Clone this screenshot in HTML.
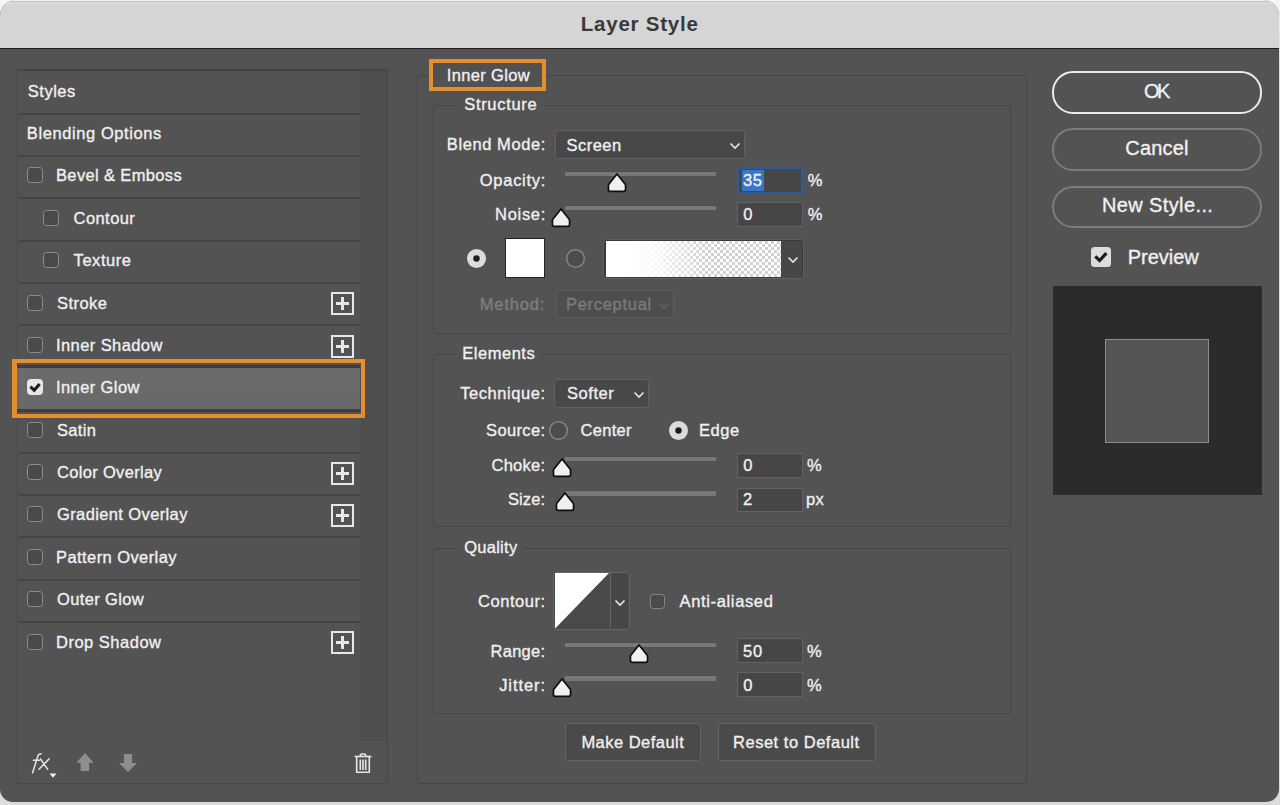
<!DOCTYPE html>
<html><head><meta charset="utf-8"><title>Layer Style</title>
<style>
*{margin:0;padding:0;box-sizing:border-box}
html,body{width:1280px;height:805px;overflow:hidden;background:linear-gradient(#f6f6f6,#dcdcdc 8%,#dcdcdc)}
body{position:relative;font-family:"Liberation Sans",sans-serif}
#win{position:absolute;left:0;top:0;width:1279px;height:802px;background:#535353;border-radius:16px 16px 13px 13px;overflow:hidden}
#win div,#win svg{position:absolute}
.tx{white-space:nowrap;color:#f0f0f0;-webkit-text-stroke:0.35px currentColor}
.sep{left:19px;width:341px;height:2px;background:#454545}
.cb{width:16px;height:16px;border:1.5px solid #8c8c8c;border-radius:3.5px;background:#4a4a4a}
.cb.on{background:#e6e6e6;border-color:#e6e6e6}
.plus{left:331px;width:23px;height:23px;border:2px solid #e8e8e8}
.plus:before{content:"";position:absolute;left:3px;top:8px;width:13px;height:3px;background:#e8e8e8}
.plus:after{content:"";position:absolute;left:8px;top:3px;width:3px;height:13px;background:#e8e8e8}
.grp{border:1px solid #454545;border-radius:2px}
.lbg{background:#535353;height:6px}
.dd{background:#484848;border:1.5px solid #616161;border-radius:3.5px}
.inp{background:#464646;border:1.2px solid #626262}
.track{left:565px;width:151px;height:4.6px;background:#787878;border-radius:1px;box-shadow:0 -1px 0 #4d4d4d}
.btn{background:#4a4a4a;border:1.5px solid #646464;border-radius:3px}
.pill{left:1052px;width:210px;height:42.5px;border:2px solid #7c7c7c;border-radius:21px}

</style></head><body>
<div id="win">
<div style="left:0;top:0;width:1279px;height:49px;background:#d5d5d5;border-top:1px solid #f2f2f2;box-shadow:inset 0 1.5px 0 #c6c6c6,inset 0 2.5px 0 #e6e6e6;border-bottom:1px solid #1f1f1f"></div>
<div style="left:17px;top:69px;width:371px;height:715px;border:1px solid #474747;border-top:2px solid #444"></div>
<div style="left:360px;top:71px;width:27px;height:670px;background:#4e4e4e"></div>
<div class="sep" style="top:112.5px"></div>
<div class="sep" style="top:154.9px"></div>
<div class="sep" style="top:197.2px"></div>
<div class="sep" style="top:239.6px"></div>
<div class="sep" style="top:282.0px"></div>
<div class="sep" style="top:324.4px"></div>
<div class="sep" style="top:451.5px"></div>
<div class="sep" style="top:493.9px"></div>
<div class="sep" style="top:536.3px"></div>
<div class="sep" style="top:578.7px"></div>
<div class="sep" style="top:621.0px"></div>
<div style="left:17px;top:365.4px;width:343px;height:46.2px;background:linear-gradient(#6b6b6b,#696969);border-top:3px solid #3d3d45;border-bottom:3px solid #3d3d45"></div>
<div style="left:12px;top:359.3px;width:352.5px;height:58.7px;border:4.6px solid #e58e2d;border-left-width:5px;border-right-width:4.3px"></div>
<div class="cb" style="left:27.1px;top:167.4px"></div>
<div class="cb" style="left:43.2px;top:209.7px"></div>
<div class="cb" style="left:43.2px;top:252.1px"></div>
<div class="cb" style="left:27.1px;top:294.5px"></div>
<div class="cb" style="left:27.1px;top:336.9px"></div>
<div class="cb on" style="left:27.1px;top:379.3px"><svg style="left:-1.5px;top:-1.5px" width="16" height="16" viewBox="0 0 16 16"><path d="M3.4 7.7 L7.2 11.3 L12.6 4.9" fill="none" stroke="#1c1c1c" stroke-width="3.1" stroke-linecap="butt" stroke-linejoin="miter"/></svg></div>
<div class="cb" style="left:27.1px;top:421.6px"></div>
<div class="cb" style="left:27.1px;top:464.0px"></div>
<div class="cb" style="left:27.1px;top:506.4px"></div>
<div class="cb" style="left:27.1px;top:548.8px"></div>
<div class="cb" style="left:27.1px;top:591.2px"></div>
<div class="cb" style="left:27.1px;top:633.5px"></div>
<div class="plus" style="top:292.3px"></div>
<div class="plus" style="top:334.7px"></div>
<div class="plus" style="top:461.8px"></div>
<div class="plus" style="top:504.2px"></div>
<div class="plus" style="top:631.3px"></div>
<svg style="left:28px;top:750px" width="26" height="26" viewBox="28 750 26 26"><g fill="none" stroke="#e6e6e6" stroke-width="1.5" stroke-linecap="round"><path d="M32.6 772.8 L37.8 756.2 Q38.7 753.8 41.1 753.8"/><path d="M33.4 760.2 H39.8"/><path d="M39 769.3 L49.2 758.8 M40.5 758.8 L47.7 769.3"/></g></svg>
<svg style="left:49px;top:773px" width="8" height="6" viewBox="0 0 8 6"><path d="M0.5 0.5 H7.5 L4 4.8 Z" fill="#f0f0f0"/></svg>
<svg style="left:75px;top:753px" width="20" height="20" viewBox="0 0 20 20"><path d="M10 0.1 L18.6 9.8 H14.2 V18 H5.6 V9.8 H1.4 Z" fill="#8e8e8e"/></svg>
<svg style="left:118px;top:753px" width="20" height="20" viewBox="0 0 20 20"><path d="M10 19 L19 10 H14 V1 H6 V10 H1 Z" fill="#8e8e8e"/></svg>
<svg style="left:353px;top:753px" width="20" height="21" viewBox="0 0 20 21"><g fill="none" stroke="#e6e6e6" stroke-width="1.6"><path d="M1.5 3.5 H18.5"/><path d="M7.2 3.5 V2.8 Q7.2 1 9 1 H11 Q12.8 1 12.8 2.8 V3.5"/><path d="M3.7 3.5 V19.3 H16.3 V3.5"/><path d="M7.3 6.5 V17 M10 6.5 V17 M12.7 6.5 V17"/></g></svg>
<div class="grp" style="left:416.5px;top:75px;width:610.5px;height:709px"></div>
<div class="grp" style="left:433px;top:104.5px;width:578px;height:229px"></div>
<div class="lbg" style="left:456px;top:101px;width:89px"></div>
<div class="grp" style="left:433px;top:353.5px;width:578px;height:173px"></div>
<div class="lbg" style="left:455px;top:350px;width:88px"></div>
<div class="grp" style="left:433px;top:547.5px;width:578px;height:166px"></div>
<div class="lbg" style="left:456px;top:544px;width:68px"></div>
<div style="left:429px;top:58.5px;width:116.5px;height:32px;border:4px solid #e58e2d;background:#515151"></div>
<div class="dd" style="left:554.5px;top:130px;width:190.5px;height:28.5px"></div>
<svg style="left:728.5px;top:142px" width="12" height="8" viewBox="0 0 12 8"><path d="M1.5 1.5 L6 6 L10.5 1.5" fill="none" stroke="#e8e8e8" stroke-width="1.6"/></svg>
<div class="track" style="top:171.6px"></div>
<svg style="left:605.9px;top:173.1px" width="22" height="22" viewBox="0 0 22 22"><path d="M11 1 L19.2 11.3 Q19.55 11.75 19.55 12.4 L19.55 16.6 Q19.55 18.45 17.7 18.45 L4.3 18.45 Q2.45 18.45 2.45 16.6 L2.45 12.4 Q2.45 11.75 2.8 11.3 Z" fill="#f0f0f0" stroke="#0e0e0e" stroke-width="1.7" stroke-linejoin="round"/></svg>
<div class="track" style="top:205.6px"></div>
<svg style="left:550.4px;top:207.7px" width="22" height="22" viewBox="0 0 22 22"><path d="M11 1 L19.2 11.3 Q19.55 11.75 19.55 12.4 L19.55 16.6 Q19.55 18.45 17.7 18.45 L4.3 18.45 Q2.45 18.45 2.45 16.6 L2.45 12.4 Q2.45 11.75 2.8 11.3 Z" fill="#f0f0f0" stroke="#0e0e0e" stroke-width="1.7" stroke-linejoin="round"/></svg>
<div class="track" style="top:456.6px"></div>
<svg style="left:550.5px;top:457.9px" width="22" height="22" viewBox="0 0 22 22"><path d="M11 1 L19.2 11.3 Q19.55 11.75 19.55 12.4 L19.55 16.6 Q19.55 18.45 17.7 18.45 L4.3 18.45 Q2.45 18.45 2.45 16.6 L2.45 12.4 Q2.45 11.75 2.8 11.3 Z" fill="#f0f0f0" stroke="#0e0e0e" stroke-width="1.7" stroke-linejoin="round"/></svg>
<div class="track" style="top:491.0px"></div>
<svg style="left:553.7px;top:492.4px" width="22" height="22" viewBox="0 0 22 22"><path d="M11 1 L19.2 11.3 Q19.55 11.75 19.55 12.4 L19.55 16.6 Q19.55 18.45 17.7 18.45 L4.3 18.45 Q2.45 18.45 2.45 16.6 L2.45 12.4 Q2.45 11.75 2.8 11.3 Z" fill="#f0f0f0" stroke="#0e0e0e" stroke-width="1.7" stroke-linejoin="round"/></svg>
<div class="track" style="top:642.5px"></div>
<svg style="left:628.4px;top:643.9px" width="22" height="22" viewBox="0 0 22 22"><path d="M11 1 L19.2 11.3 Q19.55 11.75 19.55 12.4 L19.55 16.6 Q19.55 18.45 17.7 18.45 L4.3 18.45 Q2.45 18.45 2.45 16.6 L2.45 12.4 Q2.45 11.75 2.8 11.3 Z" fill="#f0f0f0" stroke="#0e0e0e" stroke-width="1.7" stroke-linejoin="round"/></svg>
<div class="track" style="top:676.0px"></div>
<svg style="left:550.5px;top:678.3px" width="22" height="22" viewBox="0 0 22 22"><path d="M11 1 L19.2 11.3 Q19.55 11.75 19.55 12.4 L19.55 16.6 Q19.55 18.45 17.7 18.45 L4.3 18.45 Q2.45 18.45 2.45 16.6 L2.45 12.4 Q2.45 11.75 2.8 11.3 Z" fill="#f0f0f0" stroke="#0e0e0e" stroke-width="1.7" stroke-linejoin="round"/></svg>
<div style="left:736.6px;top:167px;width:66.6px;height:27.2px;border:2.6px solid #2d5c9e;background:#464646"></div>
<div style="left:741.5px;top:170.3px;width:22.8px;height:20.4px;background:#3a76c6"></div>
<div class="inp" style="left:737px;top:202px;width:65.5px;height:25.0px"></div>
<div class="inp" style="left:737px;top:453px;width:65.5px;height:24.5px"></div>
<div class="inp" style="left:737px;top:487.5px;width:65.5px;height:24.5px"></div>
<div class="inp" style="left:737px;top:637.8px;width:65.5px;height:25.0px"></div>
<div class="inp" style="left:737px;top:672.2px;width:65.5px;height:25.0px"></div>
<svg style="left:466px;top:248px" width="21" height="21" viewBox="0 0 21 21"><circle cx="10.5" cy="10.5" r="9.5" fill="#dcdcdc"/><circle cx="10.5" cy="10.5" r="3.2" fill="#1e1e1e"/></svg>
<div style="left:505px;top:238px;width:40px;height:40.3px;background:#ffffff;border:1.5px solid #222"></div>
<svg style="left:564.5px;top:248px" width="21" height="21" viewBox="0 0 21 21"><circle cx="10.5" cy="10.5" r="8.8" fill="#4c4c4c" stroke="#858585" stroke-width="1.5"/></svg>
<div style="left:602.8px;top:238.6px;width:200.8px;height:40.8px;background:#3a3a3a;border:1.5px solid #5f5f5f;border-radius:4px"></div>
<div style="left:781px;top:240.5px;width:21px;height:37px;background:#474747;border-radius:0 3px 3px 0"></div>
<div style="left:605.8px;top:241.1px;width:175px;height:36.4px;background-color:#fff;background-image:linear-gradient(90deg,#ffffff 0%,#ffffff 12%,rgba(255,255,255,0.85) 28%,rgba(255,255,255,0) 58%),repeating-conic-gradient(#d2d2d2 0 25%,#ffffff 0 50%);background-size:100% 100%,6px 6px"></div>
<svg style="left:786.5px;top:256px" width="12" height="8" viewBox="0 0 12 8"><path d="M1.5 1.5 L6 6 L10.5 1.5" fill="none" stroke="#e8e8e8" stroke-width="1.6"/></svg>
<div style="left:555.8px;top:289.6px;width:118px;height:28.4px;background:#4e4e4e;border:1.2px solid #5b5b5b;border-radius:3px"></div>
<svg style="left:658px;top:301.5px" width="12" height="8" viewBox="0 0 12 8"><path d="M1.5 1.5 L6 6 L10.5 1.5" fill="none" stroke="#646464" stroke-width="1.4"/></svg>
<div class="dd" style="left:554.4px;top:379px;width:94.4px;height:29px"></div>
<svg style="left:632.5px;top:391px" width="12" height="8" viewBox="0 0 12 8"><path d="M1.5 1.5 L6 6 L10.5 1.5" fill="none" stroke="#e8e8e8" stroke-width="1.6"/></svg>
<svg style="left:548px;top:420px" width="21" height="21" viewBox="0 0 21 21"><circle cx="10.5" cy="10.5" r="8.8" fill="#4c4c4c" stroke="#858585" stroke-width="1.5"/></svg>
<svg style="left:667.5px;top:420px" width="21" height="21" viewBox="0 0 21 21"><circle cx="10.5" cy="10.5" r="9.5" fill="#dcdcdc"/><circle cx="10.5" cy="10.5" r="3.2" fill="#1e1e1e"/></svg>
<div style="left:553.3px;top:571.8px;width:76.5px;height:57.8px;background:#474747;border:1.5px solid #666;border-radius:4px"></div>
<svg style="left:555px;top:572.8px" width="55" height="55.6" viewBox="0 0 55 55.6" preserveAspectRatio="none"><rect width="55" height="55.6" fill="#4a4a4a"/><path d="M0 0 H54 L0 55.6 Z" fill="#ffffff"/></svg>
<div style="left:609.5px;top:572.8px;width:1.5px;height:55.6px;background:#666"></div>
<svg style="left:613.5px;top:599px" width="12" height="8" viewBox="0 0 12 8"><path d="M1.5 1.5 L6 6 L10.5 1.5" fill="none" stroke="#e8e8e8" stroke-width="1.6"/></svg>
<div class="cb" style="left:649.5px;top:593.5px;width:15.5px;height:15px;border-color:#858585"></div>
<div class="btn" style="left:565.2px;top:723px;width:135.5px;height:37.6px"></div>
<div class="btn" style="left:717.5px;top:723px;width:158.5px;height:37.6px"></div>
<div class="pill" style="top:71.2px;border:2px solid #ececec"></div>
<div class="pill" style="top:128.2px"></div>
<div class="pill" style="top:185.7px"></div>
<div style="left:1091.2px;top:247px;width:20px;height:19.6px;background:#dcdcdc;border-radius:3.5px"><svg style="left:-1px;top:-1px" width="20" height="20" viewBox="0 0 20 20"><path d="M5.3 10.3 L9.6 14.5 L16.4 7.1" fill="none" stroke="#1c1c1c" stroke-width="3.2" stroke-linecap="butt" stroke-linejoin="miter"/></svg></div>
<div style="left:1052.5px;top:286px;width:209.5px;height:209px;background:#2b2b2b"></div>
<div style="left:1105.4px;top:338.9px;width:104px;height:104px;background:#555555;border:1px solid #8c8c8c"></div>
<div class="tx" style="left:580.8px;top:14.2px;font-size:20.5px;line-height:20.5px;letter-spacing:0.77px;font-weight:bold;-webkit-text-stroke:0;color:#393939">Layer Style</div>
<div class="tx" style="left:27.8px;top:82.6px;font-size:16.5px;line-height:16.5px;letter-spacing:0.50px">Styles</div>
<div class="tx" style="left:26.8px;top:125.0px;font-size:16.5px;line-height:16.5px;letter-spacing:0.59px">Blending Options</div>
<div class="tx" style="left:56.0px;top:167.4px;font-size:16.5px;line-height:16.5px;letter-spacing:0.36px">Bevel &amp; Emboss</div>
<div class="tx" style="left:73.6px;top:209.7px;font-size:16.5px;line-height:16.5px;letter-spacing:0.42px">Contour</div>
<div class="tx" style="left:73.6px;top:252.1px;font-size:16.5px;line-height:16.5px;letter-spacing:0.54px">Texture</div>
<div class="tx" style="left:57.0px;top:294.5px;font-size:16.5px;line-height:16.5px;letter-spacing:0.45px">Stroke</div>
<div class="tx" style="left:56.0px;top:336.9px;font-size:16.5px;line-height:16.5px;letter-spacing:0.41px">Inner Shadow</div>
<div class="tx" style="left:56.0px;top:379.3px;font-size:16.5px;line-height:16.5px;letter-spacing:0.40px">Inner Glow</div>
<div class="tx" style="left:57.0px;top:421.6px;font-size:16.5px;line-height:16.5px;letter-spacing:0.34px">Satin</div>
<div class="tx" style="left:57.0px;top:464.0px;font-size:16.5px;line-height:16.5px;letter-spacing:0.32px">Color Overlay</div>
<div class="tx" style="left:57.0px;top:506.4px;font-size:16.5px;line-height:16.5px;letter-spacing:0.38px">Gradient Overlay</div>
<div class="tx" style="left:56.0px;top:548.8px;font-size:16.5px;line-height:16.5px;letter-spacing:0.42px">Pattern Overlay</div>
<div class="tx" style="left:57.0px;top:591.2px;font-size:16.5px;line-height:16.5px;letter-spacing:0.36px">Outer Glow</div>
<div class="tx" style="left:56.0px;top:633.5px;font-size:16.5px;line-height:16.5px;letter-spacing:0.50px">Drop Shadow</div>
<div class="tx" style="left:446.8px;top:66.6px;font-size:16.5px;line-height:16.5px;letter-spacing:0.35px">Inner Glow</div>
<div class="tx" style="left:464.2px;top:95.6px;font-size:16.5px;line-height:16.5px;letter-spacing:0.69px">Structure</div>
<div class="tx" style="left:446.8px;top:136.2px;font-size:16.5px;line-height:16.5px;letter-spacing:0.58px">Blend Mode:</div>
<div class="tx" style="left:566.5px;top:136.6px;font-size:16.5px;line-height:16.5px;letter-spacing:0.46px">Screen</div>
<div class="tx" style="left:479.8px;top:172.0px;font-size:16.5px;line-height:16.5px;letter-spacing:0.72px">Opacity:</div>
<div class="tx" style="left:743.1px;top:171.7px;font-size:16.5px;line-height:16.5px;letter-spacing:0.60px">35</div>
<div class="tx" style="left:807.8px;top:171.7px;font-size:16.5px;line-height:16.5px;letter-spacing:0.00px">%</div>
<div class="tx" style="left:495.1px;top:206.4px;font-size:16.5px;line-height:16.5px;letter-spacing:0.68px">Noise:</div>
<div class="tx" style="left:743.3px;top:206.4px;font-size:16.5px;line-height:16.5px;letter-spacing:0.00px">0</div>
<div class="tx" style="left:807.8px;top:206.4px;font-size:16.5px;line-height:16.5px;letter-spacing:0.00px">%</div>
<div class="tx" style="left:479.8px;top:296.3px;font-size:16.5px;line-height:16.5px;letter-spacing:0.83px;color:#7e7e7e">Method:</div>
<div class="tx" style="left:566.0px;top:296.3px;font-size:16.5px;line-height:16.5px;letter-spacing:0.70px;color:#7a7a7a">Perceptual</div>
<div class="tx" style="left:462.3px;top:344.8px;font-size:16.5px;line-height:16.5px;letter-spacing:0.52px">Elements</div>
<div class="tx" style="left:460.2px;top:385.4px;font-size:16.5px;line-height:16.5px;letter-spacing:0.56px">Technique:</div>
<div class="tx" style="left:567.1px;top:385.4px;font-size:16.5px;line-height:16.5px;letter-spacing:0.52px">Softer</div>
<div class="tx" style="left:486.1px;top:422.0px;font-size:16.5px;line-height:16.5px;letter-spacing:0.35px">Source:</div>
<div class="tx" style="left:580.5px;top:422.0px;font-size:16.5px;line-height:16.5px;letter-spacing:0.31px">Center</div>
<div class="tx" style="left:698.9px;top:422.0px;font-size:16.5px;line-height:16.5px;letter-spacing:0.55px">Edge</div>
<div class="tx" style="left:491.5px;top:456.6px;font-size:16.5px;line-height:16.5px;letter-spacing:0.26px">Choke:</div>
<div class="tx" style="left:743.3px;top:456.6px;font-size:16.5px;line-height:16.5px;letter-spacing:0.00px">0</div>
<div class="tx" style="left:807.1px;top:456.6px;font-size:16.5px;line-height:16.5px;letter-spacing:0.00px">%</div>
<div class="tx" style="left:508.0px;top:490.7px;font-size:16.5px;line-height:16.5px;letter-spacing:0.10px">Size:</div>
<div class="tx" style="left:743.0px;top:490.7px;font-size:16.5px;line-height:16.5px;letter-spacing:0.00px">2</div>
<div class="tx" style="left:806.1px;top:490.7px;font-size:16.5px;line-height:16.5px;letter-spacing:0.22px">px</div>
<div class="tx" style="left:464.2px;top:539.4px;font-size:16.5px;line-height:16.5px;letter-spacing:0.27px">Quality</div>
<div class="tx" style="left:478.0px;top:592.6px;font-size:16.5px;line-height:16.5px;letter-spacing:0.54px">Contour:</div>
<div class="tx" style="left:679.5px;top:592.6px;font-size:16.5px;line-height:16.5px;letter-spacing:0.65px">Anti-aliased</div>
<div class="tx" style="left:490.5px;top:642.6px;font-size:16.5px;line-height:16.5px;letter-spacing:0.28px">Range:</div>
<div class="tx" style="left:743.0px;top:642.6px;font-size:16.5px;line-height:16.5px;letter-spacing:0.80px">50</div>
<div class="tx" style="left:807.1px;top:642.6px;font-size:16.5px;line-height:16.5px;letter-spacing:0.00px">%</div>
<div class="tx" style="left:499.2px;top:677.0px;font-size:16.5px;line-height:16.5px;letter-spacing:0.92px">Jitter:</div>
<div class="tx" style="left:743.3px;top:677.0px;font-size:16.5px;line-height:16.5px;letter-spacing:0.00px">0</div>
<div class="tx" style="left:807.1px;top:677.0px;font-size:16.5px;line-height:16.5px;letter-spacing:0.00px">%</div>
<div class="tx" style="left:581.4px;top:733.5px;font-size:16.5px;line-height:16.5px;letter-spacing:0.47px">Make Default</div>
<div class="tx" style="left:733.0px;top:733.5px;font-size:16.5px;line-height:16.5px;letter-spacing:0.52px">Reset to Default</div>
<div class="tx" style="left:1144.1px;top:81.4px;font-size:20px;line-height:20px;letter-spacing:-2.56px">OK</div>
<div class="tx" style="left:1125.3px;top:138.2px;font-size:20px;line-height:20px;letter-spacing:0.20px">Cancel</div>
<div class="tx" style="left:1102.0px;top:195.4px;font-size:20px;line-height:20px;letter-spacing:0.38px">New Style...</div>
<div class="tx" style="left:1127.7px;top:247.4px;font-size:20px;line-height:20px;letter-spacing:-0.01px">Preview</div>
</div>
</body></html>
